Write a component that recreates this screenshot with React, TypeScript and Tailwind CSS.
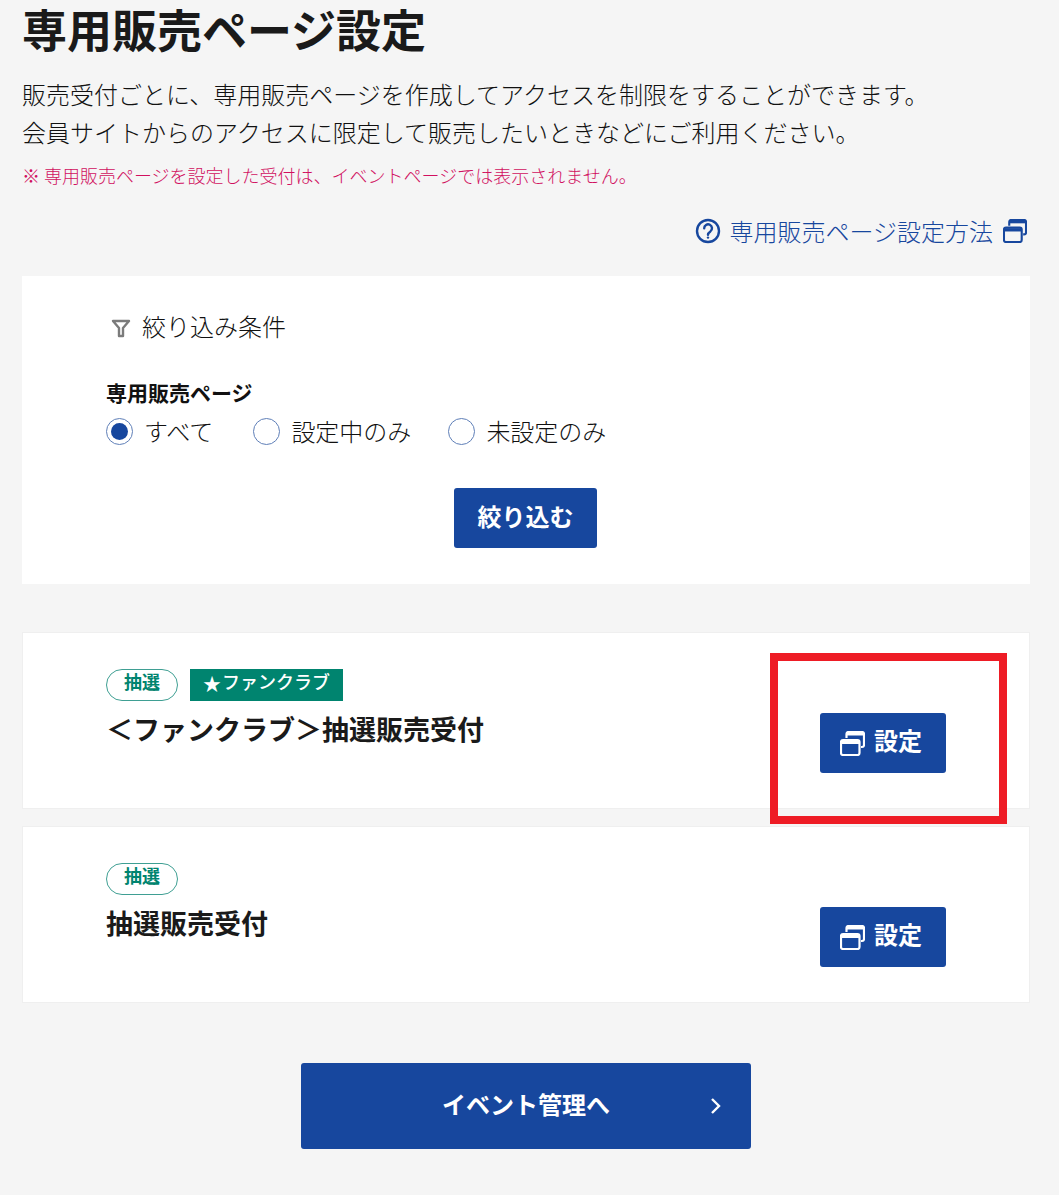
import React from "react";

function WindowIcon({ color, size = 25 }: { color: string; size?: number }) {
  return (
    <svg width={size} height={size} viewBox="0 0 25 25" fill="none">
      <path d="M6.500 7V3a2 2 0 0 1 2-2h13.500a2 2 0 0 1 2 2v11a2 2 0 0 1-2 2h-1" stroke={color} strokeWidth="2.200" />
      <path d="M6.500 2.800h17.500" stroke={color} strokeWidth="3.400" />
      <rect x="1" y="9" width="18.500" height="15" rx="2" stroke={color} strokeWidth="2.200" />
      <path d="M1 11.300h18.500" stroke={color} strokeWidth="3.400" />
    </svg>
  );
}

function Radio({ checked, label }: { checked?: boolean; label: string }) {
  return (
    <label className="flex items-center">
      <span className="flex h-[27px] w-[27px] items-center justify-center rounded-full border-[1.5px] border-[#5f7fb8] bg-white">
        {checked && <span className="h-[17px] w-[17px] rounded-full bg-[#17479e]" />}
      </span>
      <span className="ml-[11px] text-[24px] font-light leading-[36px] text-[#111111]">{label}</span>
    </label>
  );
}

function Row({ title, fan, mt }: { title: React.ReactNode; fan?: boolean; mt: string }) {
  return (
    <div className={`${mt} flex h-[177px] justify-between border border-[#efefef] bg-white pl-[83px] pr-[83px]`}>
      <div className="pt-[36px]">
        <div className="flex h-[32px] items-center gap-[12px]">
          <span className="flex h-[32px] w-[72px] items-center justify-center rounded-full border border-[#3f9f93] bg-white pb-[7px] text-[18px] font-bold text-[#00846f]">
            抽選
          </span>
          {fan && (
            <span className="flex h-[32px] w-[153px] items-center justify-center bg-[#00846f] text-[18px] font-medium text-white">
              <span className="mb-[4px] mr-[1px] text-[18px] leading-none">★</span>
              <span className="mb-[7px]">ファンクラブ</span>
            </span>
          )}
        </div>
        <div className="mt-[2px] text-[27px] font-bold leading-[52px] text-[#1a1a1a]">{title}</div>
      </div>
      <div className="pt-[80px]">
        <button className="flex h-[60px] w-[126px] items-center justify-center gap-[9px] rounded-[3px] bg-[#17479e] pr-[4px] text-[24px] font-bold text-white">
          <WindowIcon color="#ffffff" />
          <span className="mb-[6px]">設定</span>
        </button>
      </div>
    </div>
  );
}

export default function App() {
  return (
    <div
      className="relative h-[1195px] overflow-hidden bg-[#f5f5f5] pl-[22px] pr-[29px] text-[#111111]"
      style={{ fontFamily: '"Noto Sans CJK JP", "Noto Sans", sans-serif' }}
    >
      <h1 className="h-[62px] text-[45px] font-bold leading-[58px] text-[#1a1a1a]">専用販売ページ設定</h1>
      <p className="mt-[13px] text-[24px] leading-[38px] font-light">
        販売受付ごとに、専用販売ページを作成してアクセスを制限をすることができます。
        <br />
        会員サイトからのアクセスに限定して販売したいときなどにご利用ください。
      </p>
      <p className="mt-[11px] text-[18px] leading-[26px] font-light text-[#d1105f]">
        ※ 専用販売ページを設定した受付は、イベントページでは表示されません。
      </p>
      <div className="mt-[26px] flex h-[34px] items-center justify-end pr-[3px] text-[24px] font-light text-[#17479e]">
        <svg width="26" height="26" viewBox="0 0 26 26" fill="none" stroke="#17479e" strokeWidth="2.4" className="mr-[8px]">
          <circle cx="13" cy="13" r="11" />
          <path d="M9.2 10.300a3.900 3.900 0 1 1 6.200 3.100c-1.500 1-2.400 1.700-2.400 3.400" strokeLinecap="round" />
          <circle cx="13" cy="19.600" r="1.200" fill="#17479e" stroke="none" />
        </svg>
        専用販売ページ設定方法
        <span className="ml-[10px]">
          <WindowIcon color="#17479e" size={24} />
        </span>
      </div>

      <section className="mt-[28px] h-[308px] bg-white pl-[84px] pt-[31px]">
        <div className="flex h-[38px] items-center text-[24px] font-light">
          <svg width="20" height="20" viewBox="0 0 20 20" fill="none" stroke="#7b7b7b" strokeWidth="2.4" className="ml-[5px] mr-[11px] mt-[3px]">
            <path d="M2 3h16l-6 7v8H8v-8z" strokeLinejoin="round" />
          </svg>
          絞り込み条件
        </div>
        <div className="mt-[31px] text-[21px] font-bold leading-[32px]">専用販売ページ</div>
        <div className="mt-[5px] flex h-[36px] items-center">
          <Radio checked label="すべて" />
          <span className="w-[40px]" />
          <Radio label="設定中のみ" />
          <span className="w-[37px]" />
          <Radio label="未設定のみ" />
        </div>
        <div className="mt-[39px] flex justify-center pr-[85px]">
          <button className="h-[60px] w-[143px] rounded-[3px] bg-[#17479e] pb-[4px] text-[24px] font-bold text-white">絞り込む</button>
        </div>
      </section>

      <Row mt="mt-[48px]" fan title="＜ファンクラブ＞抽選販売受付" />
      <Row mt="mt-[17px]" title="抽選販売受付" />

      <div className="mt-[60px] flex justify-center">
        <button className="relative flex h-[86px] w-[450px] items-center justify-center rounded-[3px] bg-[#17479e] pb-[4px] text-[24px] font-bold text-white">
          イベント管理へ
          <svg width="12" height="18" viewBox="0 0 12 18" fill="none" stroke="#fff" strokeWidth="2.400" className="absolute right-[29px] top-[34px]">
            <path d="M2 2l7 7-7 7" />
          </svg>
        </button>
      </div>

      <div className="absolute left-[770px] top-[653px] h-[171px] w-[237px] border-[8px] border-[#ee1c25]" />
    </div>
  );
}
